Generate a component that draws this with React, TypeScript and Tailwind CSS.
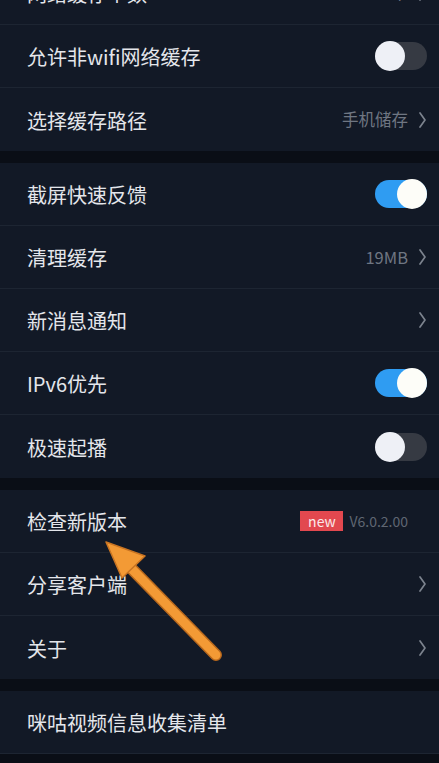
import type { ReactNode } from "react";

type Row = {
  label: string;
  right?: ReactNode;
};

const font = { fontFamily: '"Noto Sans CJK SC", "Noto Sans", sans-serif' };

function Chevron() {
  return (
    <svg width="9" height="18" viewBox="0 0 9 18" className="ml-[10px] shrink-0">
      <polyline points="2,2 7,9 2,16" fill="none" stroke="#7c838e" strokeWidth="1.7" strokeLinecap="round" strokeLinejoin="round" />
    </svg>
  );
}

function Value({ text }: { text: string }) {
  return (
    <div className="flex items-center">
      <span className="text-[16.5px] text-[#6f7682]">{text}</span>
      <Chevron />
    </div>
  );
}

function Toggle({ on }: { on: boolean }) {
  return (
    <div className={`relative h-[28px] w-[52px] rounded-full ${on ? "bg-[#2f9cf2]" : "bg-[#363a43]"}`}>
      <div
        className={`absolute top-[-1px] h-[30px] w-[30px] rounded-full ${on ? "right-0 bg-[#fdfdf8]" : "left-0 bg-[#eef0f6]"}`}
      />
    </div>
  );
}

const sections: Row[][] = [
  [
    { label: "网络缓存个数", right: <Value text="4个" /> },
    { label: "允许非wifi网络缓存", right: <Toggle on={false} /> },
    { label: "选择缓存路径", right: <Value text="手机储存" /> },
  ],
  [
    { label: "截屏快速反馈", right: <Toggle on /> },
    { label: "清理缓存", right: <Value text="19MB" /> },
    { label: "新消息通知", right: <Chevron /> },
    { label: "IPv6优先", right: <Toggle on /> },
    { label: "极速起播", right: <Toggle on={false} /> },
  ],
  [
    {
      label: "检查新版本",
      right: (
        <div className="mr-[19px] flex items-center gap-[6px]">
          <span className="flex h-[20px] w-[43px] items-center justify-center bg-[#e2484f] text-[14px] leading-none text-[#fbe9ea]">
            new
          </span>
          <span className="text-[14px] text-[#5f6672]">V6.0.2.00</span>
        </div>
      ),
    },
    { label: "分享客户端", right: <Chevron /> },
    { label: "关于", right: <Chevron /> },
  ],
  [{ label: "咪咕视频信息收集清单" }],
];

export default function App() {
  return (
    <div className="relative h-[763px] w-[439px] overflow-hidden bg-[#0a0e16]" style={font}>
      <div className="mt-[-38px] flex flex-col gap-[12px]">
        {sections.map((rows, si) => (
          <div key={si} className="flex flex-col bg-[#121926]">
            {rows.map((row, ri) => (
              <div
                key={row.label}
                className={`flex h-[63px] items-center justify-between pl-[27px] pr-[12px] ${
                  ri < rows.length - 1 || si === sections.length - 1 ? "border-b border-[#1d2532]" : ""
                }`}
              >
                <span className="pt-[2px] text-[20px] text-[#e4e6eb]">{row.label}</span>
                {row.right}
              </div>
            ))}
          </div>
        ))}
      </div>
      <svg className="pointer-events-none absolute left-0 top-0" width="439" height="763" viewBox="0 0 439 763">
        <line x1="216" y1="655" x2="128" y2="565" stroke="#b8681c" strokeWidth="12" strokeLinecap="round" />
        <line x1="216" y1="655" x2="128" y2="565" stroke="#f39a35" strokeWidth="9" strokeLinecap="round" />
        <polygon points="106,542 145,556 122,578" fill="#f39a35" stroke="#c97422" strokeWidth="1.5" strokeLinejoin="round" />
      </svg>
    </div>
  );
}
